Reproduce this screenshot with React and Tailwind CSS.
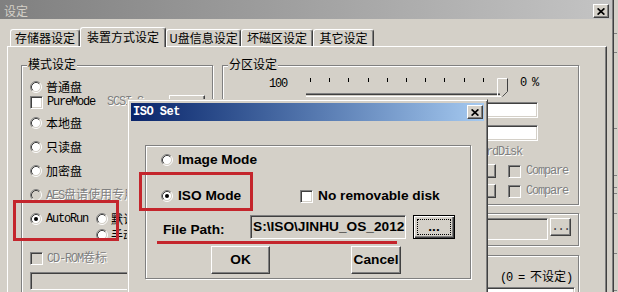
import React from "react";

const MONO = "font-['Liberation_Mono','Noto_Sans_CJK_SC',monospace] text-[12px] tracking-[-1.2px] whitespace-nowrap";
const ARIALB = "font-['Liberation_Sans','Noto_Sans',sans-serif] font-bold text-[13.7px] leading-[16px] whitespace-nowrap";
const DIS = "text-[#808080] [text-shadow:1px_1px_0_#fff]";
const RAISED = "border border-t-white border-l-white border-r-[#404040] border-b-[#404040] shadow-[inset_-1px_-1px_0_#808080]";
const SUNKEN = "border border-t-[#808080] border-l-[#808080] border-r-white border-b-white shadow-[inset_1px_1px_0_#404040,inset_-1px_-1px_0_#d4d0c8]";
const ETCHED = "border border-[#808080] shadow-[inset_1px_1px_0_#fff,1px_1px_0_#fff]";

function Radio({ checked = false, disabled = false }) {
  return (
    <svg width="12" height="12" viewBox="0 0 12 12" className="shrink-0">
      <circle cx="6" cy="6" r="4.5" fill={disabled ? "#d4d0c8" : "#fff"} />
      <path d="M2.11 9.89A5.5 5.5 0 0 1 9.89 2.11" fill="none" stroke="#808080" />
      <path d="M9.89 2.11A5.5 5.5 0 0 1 2.11 9.89" fill="none" stroke="#fff" />
      <path d="M2.82 9.18A4.5 4.5 0 0 1 9.18 2.82" fill="none" stroke="#404040" />
      <path d="M9.18 2.82A4.5 4.5 0 0 1 2.82 9.18" fill="none" stroke="#d4d0c8" />
      {checked && <circle cx="6" cy="6" r="2" fill="#000" />}
    </svg>
  );
}

function Check({ disabled = false, className = "" }) {
  return (
    <div
      className={`h-[13px] w-[13px] shrink-0 ${SUNKEN} ${disabled ? "bg-[#d4d0c8]" : "bg-white"} ${className}`}
    />
  );
}

function CloseBtn() {
  return (
    <div className={`flex h-[14px] w-[16px] shrink-0 items-center justify-center bg-[#d4d0c8] ${RAISED}`}>
      <svg width="8" height="7" viewBox="0 0 8 7">
        <path d="M0.6 0.4L7.4 6.6M7.4 0.4L0.6 6.6" stroke="#000" strokeWidth="1.7" />
      </svg>
    </div>
  );
}

function Tab({ w, active = false, children }) {
  return active ? (
    <div
      className={`relative z-10 -mb-px flex h-[20px] ${w} items-center justify-center rounded-t-[3px] border-l border-t border-r border-l-white border-t-white border-r-[#404040] bg-[#d4d0c8] pb-[2px] shadow-[inset_-1px_0_0_#808080]`}
    >
      {children}
    </div>
  ) : (
    <div
      className={`flex h-[17px] ${w} items-center justify-center rounded-t-[3px] border-l border-t border-r border-l-white border-t-white border-r-[#404040] shadow-[inset_-1px_0_0_#808080]`}
    >
      {children}
    </div>
  );
}

function Slider() {
  const ticks = Array.from({ length: 11 }, (_, i) => 10.5 + Math.round(19.2 * i));
  return (
    <svg width="214" height="22" viewBox="0 0 214 22" className="shrink-0">
      {ticks.map((x) => (
        <line key={x} x1={x} y1="2" x2={x} y2="6" stroke="#000" />
      ))}
      <rect x="6" y="17" width="194" height="1" fill="#808080" />
      <rect x="6" y="18" width="194" height="1" fill="#404040" />
      <rect x="6" y="20" width="195" height="1" fill="#fff" />
      <path d="M197.5 21V2.5H207.5" fill="none" stroke="#fff" />
      <path d="M207.5 2.5V15.5L202.5 20.5" fill="none" stroke="#404040" />
      <path d="M198 3h9v12.5l-4.5 4.5l-4.5-4.5z" fill="#d4d0c8" />
    </svg>
  );
}

function Row({ className = "", children }) {
  return <div className={`flex h-[16px] items-center ${className}`}>{children}</div>;
}

export default function App() {
  return (
    <div className="relative h-[292px] w-[618px] overflow-hidden bg-[#d4d0c8] font-['Noto_Sans_CJK_SC','Noto_Sans',sans-serif] text-[12px] leading-[14px] text-black">
      <div className="flex h-full">
        <div className="flex w-[612px] flex-col">
          {/* title bar */}
          <div className="flex h-[19px] shrink-0 items-end justify-between bg-gradient-to-r from-[#808080] to-[#c4c4c4] pb-[1px] pl-[4px] pr-[3px]">
            <span className="leading-[14px] text-[#d4d0c8]">设定</span>
            <CloseBtn />
          </div>

          {/* tabs */}
          <div className="flex h-[27px] shrink-0 items-end pl-[10px]">
            <Tab w="w-[70px]">存储器设定</Tab>
            <Tab w="w-[86px]" active>
              装置方式设定
            </Tab>
            <Tab w="w-[75px]">U盘信息设定</Tab>
            <Tab w="w-[72px]">坏磁区设定</Tab>
            <Tab w="w-[61px]">其它设定</Tab>
          </div>

          {/* tab panel */}
          <div className="ml-[7px] flex w-[600px] flex-1 items-start gap-[9px] border-l border-t border-r border-l-white border-t-white border-r-[#404040] pl-[13px] pt-[18px] shadow-[inset_-1px_0_0_#808080]">
            {/* 模式设定 */}
            <div className={`flex h-[260px] w-[192px] shrink-0 flex-col pl-[8px] ${ETCHED}`}>
              <div className="-ml-[3px] -mt-[9px] w-fit bg-[#d4d0c8] px-[1px] leading-[14px]">模式设定</div>
              <Row className="mt-[8px] gap-[4px]">
                <Radio />
                <span>普通盘</span>
              </Row>
              <div className="flex h-[14px] items-center">
                <Check />
                <span className={`ml-[4px] w-[60px] ${MONO}`}>PureMode</span>
                <span className={`w-[62px] ${MONO} ${DIS}`}>SCSI S</span>
                <div className={`h-[14px] w-[36px] shrink-0 ${RAISED}`} />
              </div>
              <Row className="mt-[6px] gap-[4px]">
                <Radio />
                <span>本地盘</span>
              </Row>
              <Row className="mt-[8px] gap-[4px]">
                <Radio />
                <span>只读盘</span>
              </Row>
              <Row className="mt-[8px] gap-[4px]">
                <Radio />
                <span>加密盘</span>
              </Row>
              <Row className="mt-[8px] gap-[4px]">
                <Radio disabled />
                <span className={`whitespace-nowrap ${DIS}`}>
                  <span className={MONO}>AES</span>盘请使用专用
                </span>
              </Row>
              <Row className="mt-[8px]">
                <Radio checked />
                <span className={`ml-[4px] w-[42px] ${MONO}`}>AutoRun</span>
                <span className="ml-[8px]">
                  <Radio />
                </span>
                <span className="ml-[3px] whitespace-nowrap">默认</span>
              </Row>
              <Row className="ml-[66px]">
                <Radio />
                <span className="ml-[3px] whitespace-nowrap">手动</span>
              </Row>
              <Row className="mt-[7px] gap-[4px]">
                <Check disabled />
                <span className={`whitespace-nowrap ${DIS}`}>
                  <span className={MONO}>CD-ROM</span>卷标
                </span>
              </Row>
              <div className={`mt-[6px] h-[18px] w-[175px] bg-[#d4d0c8] ${SUNKEN}`} />
            </div>

            {/* right column */}
            <div className="flex w-[357px] shrink-0 flex-col">
              <div className={`flex h-[140px] flex-col ${ETCHED}`}>
                <div className="ml-[5px] -mt-[9px] w-fit bg-[#d4d0c8] px-[1px] leading-[14px]">分区设定</div>
                <div className="mt-[5px] flex h-[22px] items-start">
                  <span className={`ml-[46px] mt-[1px] w-[31px] leading-[14px] ${MONO}`}>100</span>
                  <Slider />
                  <span className={`ml-[6px] leading-[14px] ${MONO}`}>0 %</span>
                </div>
                <div className={`ml-auto mr-[40px] mt-[4px] h-[16px] w-[100px] bg-white ${SUNKEN}`} />
                <div className={`ml-auto mr-[40px] mt-[7px] h-[16px] w-[100px] bg-white ${SUNKEN}`} />
                <div className={`ml-auto mr-[56px] mt-[4px] h-[14px] leading-[14px] ${MONO} ${DIS}`}>HardDisk</div>
                <div className="mt-[5px] flex h-[14px] items-center pl-[253px]">
                  <div className={`h-[14px] w-[20px] shrink-0 ${RAISED}`} />
                  <Check disabled className="ml-[12px]" />
                  <span className={`ml-[5px] ${MONO} ${DIS}`}>Compare</span>
                </div>
                <div className="mt-[6px] flex h-[14px] items-center pl-[253px]">
                  <div className={`h-[14px] w-[20px] shrink-0 ${RAISED}`} />
                  <Check disabled className="ml-[12px]" />
                  <span className={`ml-[5px] ${MONO} ${DIS}`}>Compare</span>
                </div>
              </div>

              <div className={`mt-[8px] flex h-[33px] items-start pt-[4px] ${ETCHED}`}>
                <div className={`ml-auto h-[22px] w-[100px] bg-[#d4d0c8] ${SUNKEN}`} />
                <div className={`ml-[2px] mr-[7px] flex h-[18px] w-[21px] items-center justify-center text-[#404040] ${RAISED} ${MONO}`}>
                  ...
                </div>
              </div>

              <div className={`mt-[9px] flex h-[60px] flex-col ${ETCHED}`}>
                <div className="ml-[277px] mt-[13px] h-[14px] whitespace-nowrap leading-[14px]">
                  <span className={MONO}>(0 = </span>不设定<span className={MONO}>)</span>
                </div>
                <div className={`ml-auto mr-[3px] mt-[4px] h-[20px] w-[150px] bg-white ${SUNKEN}`} />
              </div>
            </div>
          </div>
        </div>
        <div className="w-px bg-[#808080]" />
        <div className="w-px bg-[#404040]" />
        <div className="flex-1">
          <svg width="4" height="292" viewBox="0 0 4 292">
            {[33, 52, 128, 175, 187, 193, 213, 253, 290].map((y) => (
              <rect key={y} x="0" y={y} width="3" height="1" fill="#808080" />
            ))}
          </svg>
        </div>
      </div>

      {/* ISO Set dialog */}
      <div className="absolute left-[127px] top-[99px] flex h-[200px] w-[361px] flex-col border border-t-[#d4d0c8] border-l-[#d4d0c8] border-b-[#404040] border-r-[#404040] bg-[#d4d0c8] p-[3px] shadow-[inset_1px_1px_0_#fff,inset_-1px_-1px_0_#808080]">
        <div className="flex h-[18px] shrink-0 items-center justify-between bg-gradient-to-r from-[#0a246a] to-[#a6caf0] pl-[2px] pr-[1px]">
          <span className="font-['Liberation_Mono',monospace] text-[12px] font-bold tracking-[-0.5px] text-white">ISO Set</span>
          <CloseBtn />
        </div>
        <div className={`ml-[14px] mt-[24px] flex h-[134px] w-[326px] flex-col ${ETCHED}`}>
          <div className="mt-[7px] flex h-[14px] items-center pl-[15px]">
            <Radio />
            <span className={`ml-[5px] ${ARIALB}`}>Image Mode</span>
          </div>
          <div className="mt-[22px] flex h-[14px] items-center pl-[15px]">
            <div className="flex w-[139px] items-center">
              <Radio checked />
              <span className={`ml-[5px] ${ARIALB}`}>ISO Mode</span>
            </div>
            <Check />
            <span className={`ml-[5px] ${ARIALB}`}>No removable disk</span>
          </div>
          <div className="mt-[12px] flex h-[24px] items-center pl-[17px]">
            <span className={`mt-[6px] w-[87px] ${ARIALB}`}>File Path:</span>
            <div className={`flex h-[24px] w-[156px] items-center overflow-hidden bg-[#d4d0c8] pl-[2px] ${SUNKEN}`}>
              <span className={ARIALB}>S:\ISO\JINHU_OS_2012</span>
            </div>
            <div className="ml-[7px] flex h-[24px] w-[42px] border border-black p-[3px] shadow-[inset_1px_1px_0_#fff,inset_-1px_-1px_0_#404040,inset_-2px_-2px_0_#808080]">
              <div className={`flex flex-1 items-center justify-center border border-dotted border-black ${ARIALB}`}>
                ...
              </div>
            </div>
          </div>
          <div className="mt-[7px] flex h-[28px] pl-[65px]">
            <div className={`flex h-[28px] w-[59px] items-center justify-center ${RAISED} ${ARIALB}`}>OK</div>
            <div className={`ml-[81px] flex h-[28px] w-[50px] items-center justify-center ${RAISED} ${ARIALB}`}>Cancel</div>
          </div>
        </div>
      </div>

      {/* red annotations */}
      <div className="absolute left-[13px] top-[200px] h-[41px] w-[106px] border-[3px] border-[#c4252c]" />
      <div className="absolute left-[139px] top-[172px] h-[39px] w-[114px] border-[3px] border-[#c4252c]" />
      <div className="absolute left-[157px] top-[241px] h-[3px] w-[240px] bg-[#c4252c]" />
    </div>
  );
}
